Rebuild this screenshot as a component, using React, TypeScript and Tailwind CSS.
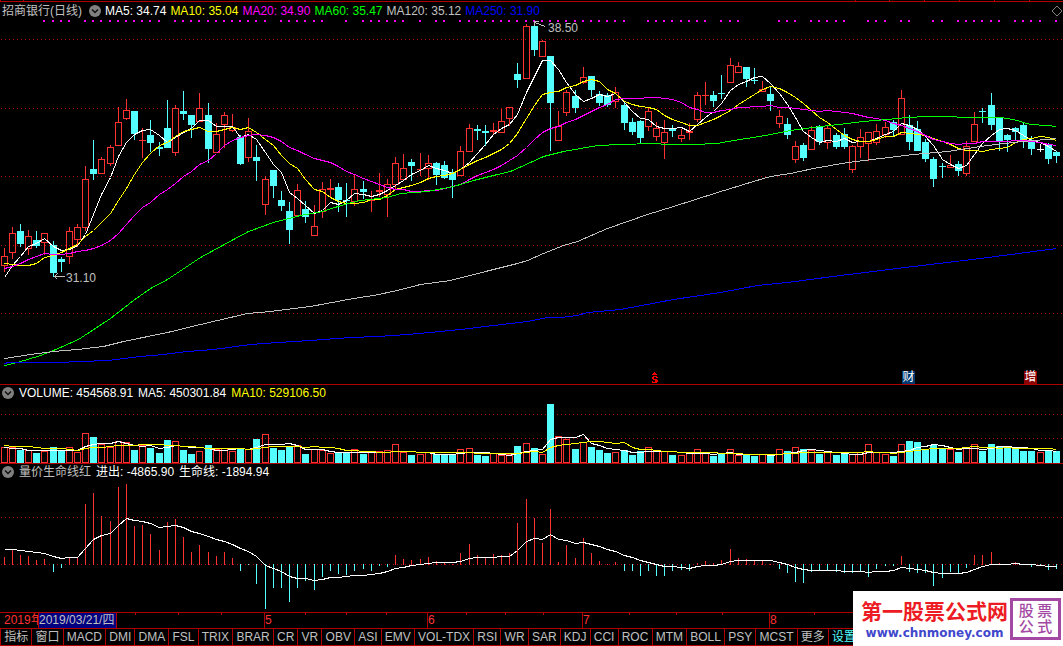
import React from 'react';
import clsx from 'clsx';

type Candle = ['u' | 'd' | 'f', number, number, number, number];
type Point = [number, number];

// kind (up / down / flat), high, body top, body bottom, low - in thirds of a pixel
const CANDLES: Candle[] = [
  ['u', 744, 769, 797, 815], ['u', 681, 700, 758, 777], ['d', 672, 693, 732, 741], ['u', 690, 709, 748, 765],
  ['d', 693, 720, 738, 743], ['u', 699, 699, 728, 765], ['d', 723, 735, 819, 832], ['d', 771, 777, 786, 816],
  ['u', 682, 693, 770, 792], ['u', 672, 681, 719, 741], ['u', 498, 537, 683, 692], ['d', 420, 507, 522, 540],
  ['u', 471, 477, 521, 521], ['u', 435, 441, 492, 498], ['u', 321, 366, 438, 438], ['u', 297, 330, 356, 360],
  ['d', 333, 333, 402, 420], ['u', 384, 421, 423, 474], ['d', 360, 405, 429, 456], ['d', 426, 441, 446, 468],
  ['d', 300, 384, 444, 444], ['u', 315, 324, 458, 468], ['d', 273, 333, 342, 360], ['d', 345, 345, 375, 414],
  ['u', 279, 324, 365, 365], ['d', 309, 345, 447, 489], ['u', 369, 402, 458, 458], ['u', 336, 345, 375, 444],
  ['u', 342, 382, 393, 396], ['d', 405, 411, 492, 495], ['u', 354, 393, 473, 486], ['d', 435, 471, 483, 543],
  ['u', 528, 537, 614, 645], ['d', 510, 510, 558, 594], ['d', 573, 600, 618, 633], ['d', 606, 633, 690, 732],
  ['u', 552, 570, 648, 648], ['d', 603, 627, 651, 669], ['u', 615, 678, 708, 708], ['u', 546, 567, 635, 654],
  ['u', 537, 564, 570, 591], ['d', 549, 561, 600, 636], ['d', 549, 600, 603, 651], ['u', 525, 567, 605, 618],
  ['d', 543, 567, 576, 597], ['u', 573, 597, 603, 636], ['u', 519, 570, 576, 591], ['u', 537, 552, 584, 651],
  ['u', 471, 489, 555, 570], ['u', 462, 504, 540, 543], ['d', 477, 486, 498, 543], ['u', 459, 507, 509, 528],
  ['u', 465, 489, 507, 540], ['d', 486, 489, 525, 555], ['d', 483, 495, 534, 537], ['d', 507, 516, 540, 594],
  ['u', 438, 453, 528, 528], ['u', 372, 384, 455, 455], ['d', 375, 387, 393, 420], ['d', 375, 393, 399, 438],
  ['u', 369, 390, 396, 405], ['u', 327, 363, 399, 399], ['u', 321, 321, 356, 378], ['d', 189, 222, 240, 264],
  ['u', 72, 78, 236, 236], ['d', 66, 78, 150, 168], ['u', 120, 123, 171, 171], ['d', 168, 168, 309, 453],
  ['u', 333, 378, 423, 423], ['u', 270, 276, 338, 348], ['d', 270, 288, 324, 339], ['u', 201, 231, 249, 251],
  ['d', 228, 228, 270, 291], ['d', 273, 282, 309, 318], ['d', 279, 285, 315, 321], ['u', 261, 276, 306, 324],
  ['d', 309, 315, 369, 390], ['d', 354, 366, 396, 405], ['d', 360, 363, 414, 429], ['u', 321, 333, 381, 393],
  ['u', 366, 384, 411, 423], ['u', 360, 396, 429, 477], ['d', 375, 384, 393, 411], ['u', 387, 405, 417, 426],
  ['u', 369, 393, 399, 420], ['u', 276, 285, 360, 366], ['u', 246, 285, 288, 315], ['d', 273, 285, 303, 321],
  ['d', 225, 279, 282, 297], ['u', 174, 195, 249, 249], ['u', 186, 198, 219, 219], ['d', 201, 201, 237, 261],
  ['d', 204, 240, 243, 252], ['u', 243, 267, 276, 276], ['d', 261, 282, 303, 333], ['u', 330, 348, 372, 384],
  ['d', 354, 372, 405, 417], ['u', 423, 438, 480, 489], ['d', 429, 435, 474, 483], ['u', 378, 390, 450, 450],
  ['d', 375, 378, 426, 435], ['u', 378, 384, 428, 447], ['d', 399, 405, 441, 447], ['d', 384, 402, 441, 447],
  ['u', 435, 438, 510, 519], ['u', 387, 411, 440, 474], ['u', 396, 396, 431, 483], ['u', 372, 393, 429, 435],
  ['u', 366, 381, 405, 414], ['d', 360, 366, 390, 411], ['u', 270, 294, 405, 405], ['d', 345, 375, 426, 450],
  ['d', 363, 387, 453, 453], ['d', 417, 426, 477, 486], ['d', 471, 477, 537, 561], ['d', 489, 498, 501, 534],
  ['u', 465, 495, 503, 503], ['d', 483, 492, 513, 528], ['u', 423, 438, 522, 528], ['u', 336, 372, 426, 426],
  ['d', 324, 333, 336, 369], ['d', 279, 315, 375, 390], ['d', 351, 351, 423, 453], ['d', 402, 405, 420, 456],
  ['d', 381, 384, 396, 423], ['d', 369, 375, 423, 444], ['d', 408, 423, 447, 465], ['f', 432, 447, 450, 456],
  ['d', 429, 432, 477, 492], ['d', 453, 456, 468, 489],
];

// bar tops, thirds of a pixel below PANEL_TOP
const VOLUMES = [
  220, 220, 225, 229, 234, 231, 216, 228, 220, 235, 178, 186, 211, 220, 202, 204, 225, 214, 219, 234,
  195, 202, 225, 237, 231, 210, 226, 222, 231, 219, 226, 192, 181, 219, 225, 217, 213, 237, 226, 229,
  237, 234, 232, 226, 237, 234, 232, 229, 211, 234, 240, 241, 234, 237, 239, 237, 226, 223, 240, 243,
  238, 244, 241, 213, 208, 219, 241, 87, 187, 196, 222, 204, 216, 225, 234, 235, 225, 240, 228, 220,
  228, 232, 240, 244, 238, 226, 235, 243, 237, 226, 244, 238, 243, 241, 240, 226, 228, 220, 222, 228,
  237, 235, 240, 235, 241, 235, 211, 234, 241, 243, 211, 198, 201, 225, 210, 222, 226, 231, 219, 211,
  228, 207, 214, 216, 219, 228, 228, 235, 228, 228,
];

const FLOW = [
  546, 525, 540, 543, 555, 552, 590, 578, 549, 549, 387, 354, 423, 438, 336, 327, 453, 450, 477, 525,
  441, 432, 486, 531, 510, 531, 543, 531, 549, 587, 568, 627, 702, 639, 639, 681, 639, 618, 645, 606,
  587, 597, 600, 587, 581, 587, 573, 576, 540, 552, 555, 552, 546, 558, 563, 567, 534, 507, 540, 546,
  537, 540, 534, 444, 372, 429, 504, 402, 561, 510, 549, 489, 534, 558, 567, 561, 588, 588, 603, 587,
  603, 603, 587, 584, 587, 564, 558, 564, 555, 522, 549, 552, 558, 558, 567, 582, 594, 621, 624, 591,
  587, 587, 591, 594, 594, 588, 606, 582, 573, 573, 543, 591, 594, 594, 633, 609, 591, 594, 579, 540,
  540, 531, 564, 568, 561, 568, 576, 570, 585, 582,
];

const LIFE_LINE = [
  523, 523, 525, 528, 531, 535, 543, 549, 547, 547, 520, 492, 481, 474, 451, 430, 436, 439, 446, 458,
  454, 450, 457, 468, 476, 484, 492, 499, 507, 519, 530, 544, 570, 580, 590, 603, 610, 610, 616, 612,
  607, 607, 604, 601, 600, 598, 594, 590, 580, 576, 571, 568, 565, 562, 562, 562, 558, 550, 547, 547,
  547, 544, 544, 526, 499, 489, 493, 478, 492, 496, 505, 502, 508, 514, 523, 530, 540, 546, 556, 561,
  567, 573, 574, 576, 579, 574, 571, 571, 568, 559, 556, 556, 556, 556, 556, 561, 568, 577, 582, 586,
  586, 586, 586, 589, 589, 589, 592, 589, 589, 586, 577, 580, 583, 587, 592, 595, 595, 595, 591, 583,
  574, 568, 568, 568, 565, 568, 568, 571, 574, 574,
];

const MA60: Point[] = [
  [4, 365], [13, 363], [27, 359], [40, 355], [53, 350], [78, 339], [110, 318], [133, 300], [150, 288], [167, 279],
  [200, 257], [233, 239], [248, 231], [273, 222], [300, 215], [322, 211], [347, 203], [360, 200], [387, 197],
  [400, 193], [427, 191], [453, 186], [473, 180], [493, 175], [510, 171], [530, 162], [543, 156], [563, 151],
  [597, 145], [620, 144], [653, 143], [667, 144], [693, 144], [717, 143], [733, 140], [753, 137], [770, 134],
  [790, 130], [820, 126], [847, 123], [863, 121], [887, 119], [907, 117], [927, 116], [953, 116], [960, 117],
  [1000, 117], [1013, 119], [1030, 124], [1047, 125], [1056, 126],
];

const MA120: Point[] = [
  [4, 358], [30, 354], [53, 351], [77, 349], [103, 346], [123, 341], [167, 332], [200, 324], [247, 313],
  [270, 311], [310, 306], [353, 298], [373, 295], [397, 290], [420, 284], [450, 280], [493, 269], [517, 263],
  [527, 260], [543, 253], [563, 245], [577, 241], [607, 228], [647, 214], [673, 206], [717, 192], [753, 181],
  [770, 176], [790, 173], [813, 168], [847, 162], [880, 158], [913, 154], [947, 151], [967, 148], [987, 145],
  [1013, 142], [1033, 140], [1047, 139], [1056, 138],
];

const MA250: Point[] = [
  [4, 363], [8, 362], [57, 362], [80, 361], [107, 360], [140, 356], [163, 354], [187, 351], [213, 349],
  [250, 344], [277, 342], [310, 340], [350, 337], [377, 336], [407, 334], [440, 331], [460, 329], [493, 325],
  [527, 321], [547, 317], [560, 317], [577, 315], [587, 312], [620, 309], [673, 299], [720, 292], [757, 285],
  [787, 282], [840, 275], [913, 266], [980, 258], [1056, 248],
];

// days without a marker in the magenta strip
const NO_MARK = new Set([
  0, 1, 2, 3, 4, 9, 20, 33, 40, 41, 43, 50, 52, 55, 77, 78, 87, 91, 92, 93, 94, 98, 104, 105, 109, 112, 113,
  116, 123, 128,
]);

const TABS = [
  '指标', '窗口', 'MACD', 'DMI', 'DMA', 'FSL', 'TRIX', 'BRAR', 'CR', 'VR', 'OBV', 'ASI', 'EMV', 'VOL-TDX', 'RSI',
  'WR', 'SAR', 'KDJ', 'CCI', 'ROC', 'MTM', 'BOLL', 'PSY', 'MCST', '更多', '设置',
];

const RED = '#ff3232';
const CYAN = '#54ffff';
const FRAME = '#b00000';
const PANEL_TOP = 375;

const dayX = (i: number) => Math.floor(4.1 + 8.157 * i);
const px = (v: number) => Math.round(v / 3);
const panelY = (v: number) => PANEL_TOP + px(v);

// leading values come from days left of the window
const average = (values: number[], span: number, lead: number[]) =>
  values.map((_, i) => {
    if (i < lead.length) return lead[i];
    const part = values.slice(i - span + 1, i + 1);
    return part.reduce((a, b) => a + b, 0) / span;
  });

const toPoints = (values: number[], top = 0): Point[] =>
  values.map((v, i) => [dayX(i), Math.floor(top + v / 3)]);

const closes = CANDLES.map(([kind, , top, bottom]) => (kind === 'u' ? top : bottom));

const Line = ({ points, color }: { points: Point[]; color: string }) => (
  <polyline points={points.map(([x, y]) => `${x + 0.5},${y + 0.5}`).join(' ')} fill="none" stroke={color} />
);

const GridLine = ({ y }: { y: number }) => (
  <line x1={1} x2={1063} y1={y + 0.5} y2={y + 0.5} stroke={FRAME} strokeDasharray="1 3" />
);

const Plot = ({ top, height, className, children }: {
  top: number;
  height: number;
  className: string;
  children: React.ReactNode;
}) => (
  <svg
    className={clsx('block w-full', className)}
    viewBox={`0 ${top} 1063 ${height}`}
    preserveAspectRatio="none"
    shapeRendering="crispEdges"
  >
    {children}
  </svg>
);

const Toggle = ({ label }: { label: string }) => (
  <button aria-label={label} className="size-3 shrink-0">
    <svg viewBox="0 0 12 12" className="size-3">
      <circle cx="6" cy="6" r="6" fill="#808080" />
      <path d="M3 4.5 L6 7.5 L9 4.5" fill="none" stroke="#101010" strokeWidth="1.5" />
    </svg>
  </button>
);

const PriceChart = () => (
  <Plot top={20} height={364} className="h-[364px]">
    {[39, 108, 176, 245, 313].map((y) => <GridLine key={y} y={y} />)}
    {CANDLES.map((_, i) => !NO_MARK.has(i) && (
      <rect key={i} x={dayX(i) - 1} y={20} width={2} height={2} fill="#ff00ff" />
    ))}
    {CANDLES.map(([kind, h, t, b, l], i) => {
      const x = dayX(i);
      const [high, top, bottom, low] = [h, t, b, l].map(px);
      const color = kind === 'u' ? RED : kind === 'd' ? CYAN : '#ffffff';
      const size = Math.max(bottom - top, 1);
      return (
        <g key={i} fill={color}>
          <rect x={x} y={high} width={1} height={Math.max(top - high, 0)} />
          <rect x={x} y={bottom} width={1} height={Math.max(low - bottom, 0)} />
          {kind === 'u' && size > 2 ? (
            <rect x={x - 2.5} y={top + 0.5} width={6} height={size - 1} fill="none" stroke={color} />
          ) : (
            <rect x={x - 3} y={top} width={7} height={size} />
          )}
        </g>
      );
    })}
    <Line points={toPoints(average(closes, 5, [832, 795, 768, 740]))} color="#ffffff" />
    <Line points={toPoints(average(closes, 10, [790, 793, 796, 796, 789, 773, 766, 757, 745]))} color="#ffff00" />
    <Line
      points={toPoints(average(closes, 20, [
        805, 798, 789, 778, 770, 759, 762, 763, 760, 755, 750, 745, 735, 720, 700, 672, 645, 622, 606,
      ]))}
      color="#ff00ff"
    />
    <Line points={MA60} color="#00ff00" />
    <Line points={MA120} color="#c0c0c0" />
    <Line points={MA250} color="#0000ff" />
    {/* low / high pointers */}
    <path d="M54.5 276.5 H64.5 M57.5 273.5 L54.5 276.5 L57.5 279.5" fill="none" stroke="#c0c0c0" />
    <path d="M538.5 21.5 H534.5 V25.5 M534.5 22.5 L545.5 26.5" fill="none" stroke="#c0c0c0" />
    {/* dividend mark */}
    <path
      d="M654 372h1v1h1v1h1v1h-5v-1h1v-1h1z M653 376h4v1h-4z M652 377h2v2h-2z M656 377h2v1h-2z M653 379h4v1h-4z M655 380h3v2h-3z M652 381h1v1h-1z M652 382h5v1h-5z"
      fill="#ff0000"
    />
  </Plot>
);

const VolumeChart = () => (
  <Plot top={401} height={62} className="h-[62px]">
    <GridLine y={414} />
    <GridLine y={438} />
    {VOLUMES.map((v, i) => {
      const y = panelY(v);
      return CANDLES[i][0] === 'd' ? (
        <rect key={i} x={dayX(i) - 3} y={y} width={7} height={463 - y} fill={CYAN} />
      ) : (
        <rect key={i} x={dayX(i) - 2.5} y={y - 0.5} width={6} height={463 - y} fill="none" stroke={RED} />
      );
    })}
    <Line points={toPoints(average(VOLUMES, 5, [218, 219, 221, 225]), PANEL_TOP)} color="#ffffff" />
    <Line
      points={toPoints(average(VOLUMES, 10, [211, 213, 213, 213, 217, 219, 220, 221, 222]), PANEL_TOP)}
      color="#ffff00"
    />
  </Plot>
);

const FlowChart = () => (
  <Plot top={480} height={132} className="h-[132px]">
    <GridLine y={517} />
    <GridLine y={564} />
    {FLOW.map((v, i) => {
      const y = panelY(v);
      return v < 568 ? (
        <rect key={i} x={dayX(i)} y={y} width={1} height={565 - y} fill={RED} />
      ) : (
        <rect key={i} x={dayX(i)} y={564} width={1} height={Math.max(y - 564, 1)} fill={CYAN} />
      );
    })}
    <Line points={toPoints(LIFE_LINE, PANEL_TOP)} color="#ffffff" />
  </Plot>
);

const DateAxis = () => (
  <div className="relative flex h-[15px] leading-[15px] text-[#ff3232]">
    <span className="w-[38px] whitespace-nowrap pl-1">2019年</span>
    {/* cursor date covers whatever stands below it on the axis */}
    <span className="relative w-[79px] whitespace-nowrap border-x border-[#b00000] bg-[#000080] text-[#c0c0c0]">
      2019/03/21/四
    </span>
    <span className="w-[147px]" />
    <span className="w-[163px] border-l border-[#b00000]">5</span>
    <span className="w-[155px] border-l border-[#b00000]">6</span>
    <span className="w-[187px] border-l border-[#b00000]">7</span>
    <span className="flex-1 border-l border-[#b00000]">8</span>
    <svg className="absolute left-0 top-0 h-0.5 w-full" viewBox="0 0 1063 2" preserveAspectRatio="none">
      {[135, 178, 221, 305, 346, 386, 466, 505, 543, 629, 676, 722, 814].map((x) => (
        <rect key={x} x={x} y={0} width={1} height={2} fill={FRAME} />
      ))}
    </svg>
  </div>
);

const SiteBadge = () => (
  <div className="absolute bottom-0 right-0 flex h-[55px] w-[210px] items-center justify-between bg-white pl-2 pr-0.5">
    <div className="flex flex-col items-center pt-1.5">
      <span className="whitespace-nowrap text-[21px] font-bold leading-[22px] text-[#ed1c24]">第一股票公式网</span>
      <a href="#" className="font-['DejaVu_Sans'] text-xs font-bold leading-5 text-[#3f48cc]">www.chnmoney.com</a>
    </div>
    <div className="grid h-[42px] w-[51px] grid-cols-2 content-center justify-items-center border-3 border-[#a349a4] px-1 text-[15px] font-medium leading-4 text-[#a349a4]">
      <span>股</span>
      <span>票</span>
      <span>公</span>
      <span>式</span>
    </div>
  </div>
);

export default function App() {
  return (
    <div className="relative overflow-hidden bg-black font-['Liberation_Sans','Noto_Sans_CJK_SC',sans-serif] text-xs text-white">
      <svg className="block h-px w-full" viewBox="0 0 1063 1" preserveAspectRatio="none">
        {[0, 23, 855, 889, 924, 959, 994, 1029].map((x) => (
          <rect key={x} x={x} y={0} width={1} height={1} fill={FRAME} />
        ))}
      </svg>

      <section className="relative border-y border-[#b00000]">
        <header className="flex h-[18px] items-center gap-1 whitespace-nowrap pl-0.5 leading-4">
          <h1 className="mr-[3px] text-[#c0c0c0]">招商银行(日线)</h1>
          <Toggle label="主图" />
          <span>MA5: 34.74</span>
          <span className="text-[#ffff00]">MA10: 35.04</span>
          <span className="text-[#ff00ff]">MA20: 34.90</span>
          <span className="text-[#00ff00]">MA60: 35.47</span>
          <span className="text-[#c0c0c0]">MA120: 35.12</span>
          <span className="text-[#0000ff]">MA250: 31.90</span>
          <svg className="ml-auto h-3 w-3" viewBox="0 0 12 12">
            <path d="M6 1 L11 6 L6 11 L1 6 Z" fill="none" stroke="#808080" />
          </svg>
        </header>
        <PriceChart />
        <span className="absolute left-[548px] top-[18px] leading-4 text-[#c0c0c0]">38.50</span>
        <span className="absolute left-[66px] top-[268px] leading-4 text-[#c0c0c0]">31.10</span>
        <span className="absolute bottom-0 left-[902px] size-[13px] bg-[#003870] text-center leading-[13px]">财</span>
        <span className="absolute bottom-0 left-[1024px] size-[13px] bg-[#8b0000] text-center leading-[13px]">增</span>
      </section>

      <section className="border-b border-[#b00000]">
        <header className="flex h-4 items-center gap-[5px] whitespace-nowrap pl-0.5 leading-4">
          <Toggle label="成交量" />
          <span>VOLUME: 454568.91</span>
          <span>MA5: 450301.84</span>
          <span className="text-[#ffff00]">MA10: 529106.50</span>
        </header>
        <VolumeChart />
      </section>

      <section className="border-b border-[#b00000]">
        <header className="flex h-4 items-center gap-[5px] whitespace-nowrap pl-0.5 leading-4">
          <Toggle label="副图" />
          <span className="text-[#c0c0c0]">量价生命线红</span>
          <span>进出: -4865.90</span>
          <span>生命线: -1894.94</span>
        </header>
        <FlowChart />
      </section>

      <DateAxis />

      <nav className="h-[18px] border-y border-l border-[#b00000]">
        <div className="flex max-w-[859px]">
          {TABS.map((tab) => (
            <button
              key={tab}
              className={clsx(
                'shrink-0 grow whitespace-nowrap border-r border-[#b00000] px-[3px] leading-4',
                tab === '设置' ? 'text-[#54ffff]' : 'text-[#c0c0c0]',
              )}
            >
              {tab}
            </button>
          ))}
        </div>
      </nav>

      <SiteBadge />
    </div>
  );
}
